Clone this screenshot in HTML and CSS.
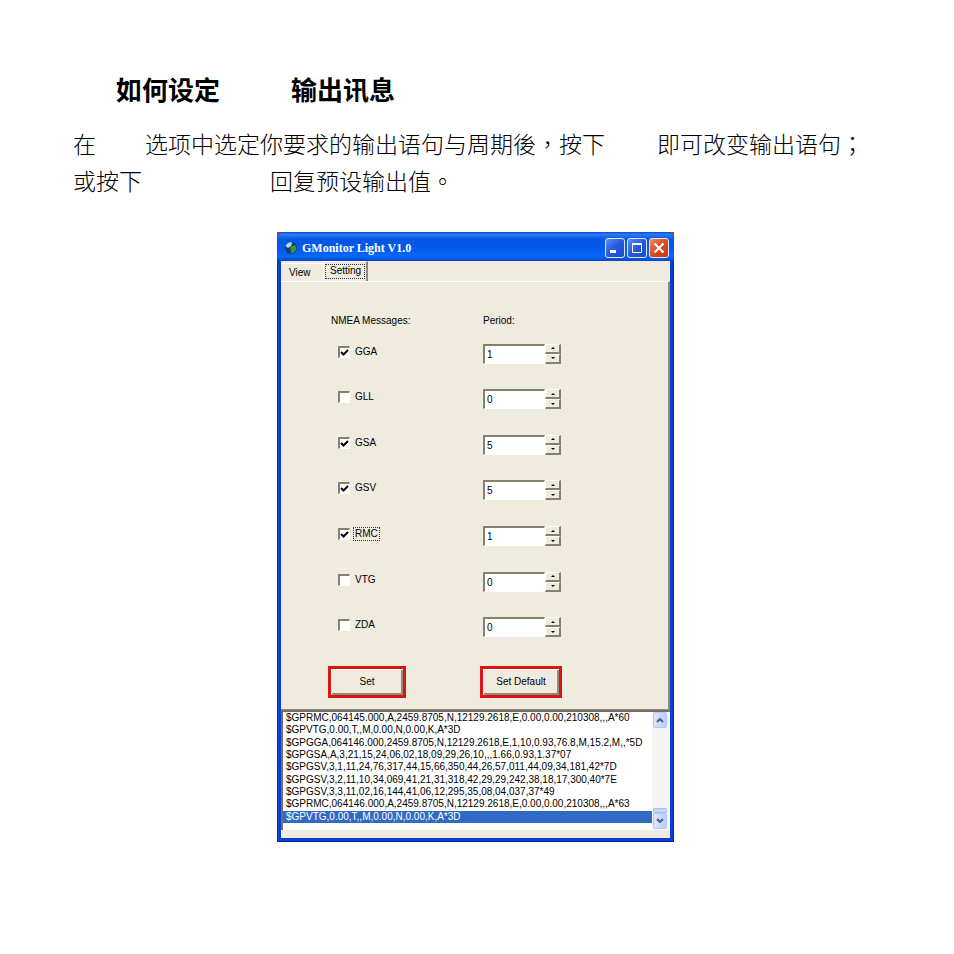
FILE: index.html
```
<!DOCTYPE html>
<html lang="zh-TW">
<head>
  <meta charset="UTF-8">
  <meta name="viewport" content="width=device-width, initial-scale=1.0">
  <title>GMonitor Light V1.0</title>
  <link rel="stylesheet" href="styles.css">
</head>
<body>
  <h1>如何设定<span class="blank blank-title"></span>输出讯息</h1>
  <p class="intro">在<span class="blank"></span>选项中选定你要求的输出语句与周期後，按下<span class="blank blank-mid"></span>即可改变输出语句；<br>或按下<span class="blank blank-wide"></span>回复预设输出值。</p>

  <div class="window-wrap">
    <div class="window">
      <div class="title-bar">
        <svg class="app-icon" viewBox="0 0 14 14" aria-hidden="true">
          <circle cx="7" cy="7" r="6" fill="#17406e"/>
          <path d="M1.500 5 Q4 0 8 1.500 L7.500 4.500 L4 7 Z" fill="#b9d8e6"/>
          <path d="M6 6 L11 4 Q14 8 10 11.500 L7 12.500 L7 9 Z" fill="#2f9a3e"/>
        </svg>
        <span class="title">GMonitor Light V1.0</span>
        <button class="win-btn" aria-label="Minimize">
          <svg viewBox="0 0 18 18"><path d="M4 11h6v3H4z" fill="#fff"/></svg>
        </button>
        <button class="win-btn" aria-label="Maximize">
          <svg viewBox="0 0 18 18"><path d="M4.500 5h9v8.500h-9z" fill="none" stroke="#fff"/><path d="M4 4h10v2H4z" fill="#fff"/></svg>
        </button>
        <button class="win-btn close" aria-label="Close">
          <svg viewBox="0 0 18 18"><path d="M4.500 4.500l9 9M13.500 4.500l-9 9" stroke="#fff" stroke-width="2"/></svg>
        </button>
      </div>

      <div class="client">
        <div class="tabs" role="tablist">
          <button class="tab" role="tab" aria-selected="false">View</button>
          <button class="tab active" role="tab" aria-selected="true"><span>Setting</span></button>
        </div>

        <form class="panel">
          <div class="row heads">
            <span>NMEA Messages:</span>
            <span>Period:</span>
          </div>
          <div class="fields">
            <div class="row">
              <label class="check"><input type="checkbox" checked><span>GGA</span></label>
              <div class="spin"><input type="text" value="1" aria-label="GGA period"><span class="arrows"><button type="button" class="up" aria-label="Up"></button><button type="button" class="down" aria-label="Down"></button></span></div>
            </div>
            <div class="row">
              <label class="check"><input type="checkbox"><span>GLL</span></label>
              <div class="spin"><input type="text" value="0" aria-label="GLL period"><span class="arrows"><button type="button" class="up" aria-label="Up"></button><button type="button" class="down" aria-label="Down"></button></span></div>
            </div>
            <div class="row">
              <label class="check"><input type="checkbox" checked><span>GSA</span></label>
              <div class="spin"><input type="text" value="5" aria-label="GSA period"><span class="arrows"><button type="button" class="up" aria-label="Up"></button><button type="button" class="down" aria-label="Down"></button></span></div>
            </div>
            <div class="row">
              <label class="check"><input type="checkbox" checked><span>GSV</span></label>
              <div class="spin"><input type="text" value="5" aria-label="GSV period"><span class="arrows"><button type="button" class="up" aria-label="Up"></button><button type="button" class="down" aria-label="Down"></button></span></div>
            </div>
            <div class="row">
              <label class="check focus"><input type="checkbox" checked><span>RMC</span></label>
              <div class="spin"><input type="text" value="1" aria-label="RMC period"><span class="arrows"><button type="button" class="up" aria-label="Up"></button><button type="button" class="down" aria-label="Down"></button></span></div>
            </div>
            <div class="row">
              <label class="check"><input type="checkbox"><span>VTG</span></label>
              <div class="spin"><input type="text" value="0" aria-label="VTG period"><span class="arrows"><button type="button" class="up" aria-label="Up"></button><button type="button" class="down" aria-label="Down"></button></span></div>
            </div>
            <div class="row">
              <label class="check"><input type="checkbox"><span>ZDA</span></label>
              <div class="spin"><input type="text" value="0" aria-label="ZDA period"><span class="arrows"><button type="button" class="up" aria-label="Up"></button><button type="button" class="down" aria-label="Down"></button></span></div>
            </div>
          </div>
          <div class="row actions">
            <span><button type="button" class="action">Set</button></span>
            <span><button type="button" class="action">Set Default</button></span>
          </div>
        </form>

        <div class="log">
          <ul class="lines">
            <li>$GPRMC,064145.000,A,2459.8705,N,12129.2618,E,0.00,0.00,210308,,,A*60</li>
            <li>$GPVTG,0.00,T,,M,0.00,N,0.00,K,A*3D</li>
            <li>$GPGGA,064146.000,2459.8705,N,12129.2618,E,1,10,0.93,76.8,M,15.2,M,,*5D</li>
            <li>$GPGSA,A,3,21,15,24,06,02,18,09,29,26,10,,,1.66,0.93,1.37*07</li>
            <li>$GPGSV,3,1,11,24,76,317,44,15,66,350,44,26,57,011,44,09,34,181,42*7D</li>
            <li>$GPGSV,3,2,11,10,34,069,41,21,31,318,42,29,29,242,38,18,17,300,40*7E</li>
            <li>$GPGSV,3,3,11,02,16,144,41,06,12,295,35,08,04,037,37*49</li>
            <li>$GPRMC,064146.000,A,2459.8705,N,12129.2618,E,0.00,0.00,210308,,,A*63</li>
            <li class="selected">$GPVTG,0.00,T,,M,0.00,N,0.00,K,A*3D</li>
          </ul>
          <div class="scrollbar">
            <button class="scroll-btn" aria-label="Scroll up"><svg viewBox="0 0 8 6"><path d="M1 5l3-3 3 3" fill="none" stroke="#4d6185" stroke-width="2"/></svg></button>
            <span class="thumb"></span>
            <button class="scroll-btn" aria-label="Scroll down"><svg viewBox="0 0 8 6"><path d="M1 1l3 3 3-3" fill="none" stroke="#4d6185" stroke-width="2"/></svg></button>
          </div>
        </div>
      </div>
    </div>
  </div>
</body>
</html>
```
FILE: styles.css
```
* {
  box-sizing: border-box;
}
body {
  margin: 0;
  padding: 69px 76px 40px 73px;
  background: #fff;
  color: #000;
  font-family: "Noto Sans CJK TC", sans-serif;
}
h1 {
  margin: 0 0 16px 43px;
  font-size: 26px;
  line-height: 40px;
  font-weight: 700;
}
.intro {
  margin: 0 0 33px;
  font-size: 23px;
  line-height: 37px;
  font-weight: 300;
  white-space: nowrap;
}
.blank {
  display: inline-block;
  width: 49px;
}
.blank-title {
  width: 71px;
}
.blank-mid {
  width: 52px;
}
.blank-wide {
  width: 128px;
}
.window-wrap {
  max-width: 397px;
  margin: 0 auto;
  background: #e0202c;
}
.window {
  padding: 0 4px 4px;
  border-radius: 6px 6px 0 0;
  background: #0a3fd6;
  box-shadow: inset 1px 0 #0a2cb4, inset -1px -1px #0a1f9c;
  font-family: "Liberation Sans", Arial, sans-serif;
  font-size: 10px;
  line-height: 14px;
}
.window button,
.window input {
  font: inherit;
  color: inherit;
  margin: 0;
}
.title-bar {
  display: flex;
  align-items: center;
  gap: 2px;
  height: 29px;
  margin: 0 -4px;
  padding: 2px 5px 0 7px;
  border-radius: 6px 6px 0 0;
  background: linear-gradient(#0a48c8 0, #2a7cf2 8%, #0556e2 25%, #0459ea 55%, #0569fb 85%, #0443c4 100%);
}
.app-icon {
  width: 14px;
  height: 14px;
}
.title {
  flex: 1;
  margin-left: 2px;
  color: #fff;
  font-family: "Liberation Serif", "Times New Roman", serif;
  font-size: 12px;
  font-weight: 700;
}
.win-btn {
  width: 20px;
  height: 20px;
  padding: 0;
  border: 1px solid #dbe6fb;
  border-radius: 3px;
  background: linear-gradient(135deg, #5c8cf0, #2458dc 50%, #1c4cc8);
}
.win-btn.close {
  background: linear-gradient(135deg, #ee8a6a, #dc4a22 50%, #c23a14);
}
.win-btn svg {
  display: block;
  width: 18px;
  height: 18px;
}
.client {
  padding-bottom: 8px;
  background: #efebde;
}
.tabs {
  display: flex;
  align-items: flex-end;
  height: 20px;
}
.tab {
  width: 42px;
  height: 18px;
  padding: 0 0 0 8px;
  border: 0;
  border-top: 1px solid #fff;
  background: none;
  text-align: left;
}
.tab.active {
  width: 45px;
  height: 20px;
  padding: 1px 1px 2px 1px;
  border-left: 1px solid #fff;
  border-right: 2px solid #8f8b7c;
}
.tab.active span {
  display: block;
  height: 15px;
  padding-left: 4px;
  border: 1px dotted #333;
  line-height: 12px;
}
.panel {
  padding: 32px 0 11px;
  border-top: 1px solid #fff;
  border-right: 2px solid #8f8b7c;
  border-bottom: 1px solid #8f8b7c;
}
.row {
  display: grid;
  grid-template-columns: 152px 1fr;
  align-items: center;
  padding-left: 50px;
}
.fields {
  display: grid;
  grid-template-rows: repeat(7, 1fr);
  height: 319px;
  margin-top: 3px;
}
.check {
  display: flex;
  align-items: center;
  gap: 3px;
  padding-left: 7px;
  margin-bottom: 4px;
}
.check span {
  padding: 0 1px;
  border: 1px solid transparent;
  line-height: 12px;
}
.check.focus span {
  border: 1px dotted #333;
}
.check input {
  appearance: none;
  width: 12px;
  height: 12px;
  border: 1px solid #fff;
  border-top: 2px solid #85816f;
  border-left: 2px solid #85816f;
  background: #fff;
}
.check input:checked {
  background: #fff url("data:image/svg+xml,%3Csvg xmlns='http://www.w3.org/2000/svg' viewBox='0 0 9 9'%3E%3Cpath d='M1 4l2.500 2.500L8 2' fill='none' stroke='%23000' stroke-width='2'/%3E%3C/svg%3E") center / 9px 9px no-repeat;
}
.spin {
  display: flex;
  width: 78px;
  height: 20px;
}
.spin input {
  flex: 1;
  min-width: 0;
  padding: 1px 2px 0;
  border: 1px solid #fff;
  border-top: 2px solid #85816f;
  border-left: 2px solid #85816f;
  background: #fff;
}
.arrows {
  display: flex;
  flex-direction: column;
  width: 16px;
}
.arrows button {
  display: flex;
  align-items: center;
  justify-content: center;
  flex: 1;
  padding: 0;
  border: 1px solid #fff;
  border-right: 2px solid #85816f;
  border-bottom: 2px solid #85816f;
  background: #efebde;
}
.arrows button::before {
  content: "";
  border: 2px solid transparent;
}
.arrows .up::before {
  border-top: 0;
  border-bottom-color: #000;
}
.arrows .down::before {
  border-bottom: 0;
  border-top-color: #000;
}
.actions {
  margin-top: 16px;
  padding-left: 47px;
}
.action {
  width: 78px;
  height: 32px;
  padding: 0;
  border: 3px solid #dd1414;
  background: #efebde;
  box-shadow: inset 1px 1px #fff, inset -2px -2px #8f8b7c;
}
.actions span:last-child .action {
  width: 82px;
}
.log {
  display: flex;
  height: 120px;
  border-top: 2px solid #74705f;
  border-left: 2px solid #74705f;
  background: #fff;
}
.lines {
  display: flex;
  flex-direction: column;
  flex: 1;
  min-width: 0;
  height: 111px;
  margin: 0;
  padding: 0;
  list-style: none;
}
.lines li {
  display: flex;
  align-items: center;
  flex: 1;
  padding-left: 3px;
  line-height: 12px;
  white-space: nowrap;
}
.lines .selected {
  background: #316ac5;
  color: #fff;
}
.scrollbar {
  display: flex;
  flex-direction: column;
  width: 18px;
  padding: 0 3px 1px 1px;
  background: #f5f4f0;
}
.scroll-btn {
  display: flex;
  align-items: center;
  justify-content: center;
  width: 14px;
  height: 16px;
  padding: 0;
  border: 1px solid #b4c8f4;
  border-radius: 2px;
  background: linear-gradient(90deg, #dbe5fe, #bccdf9);
}
.scroll-btn svg {
  width: 8px;
  height: 6px;
}
.thumb {
  height: 5px;
  margin-top: auto;
  border: 1px solid #a9bff0;
  border-radius: 1px;
  background: #c8d6fb;
}
```
